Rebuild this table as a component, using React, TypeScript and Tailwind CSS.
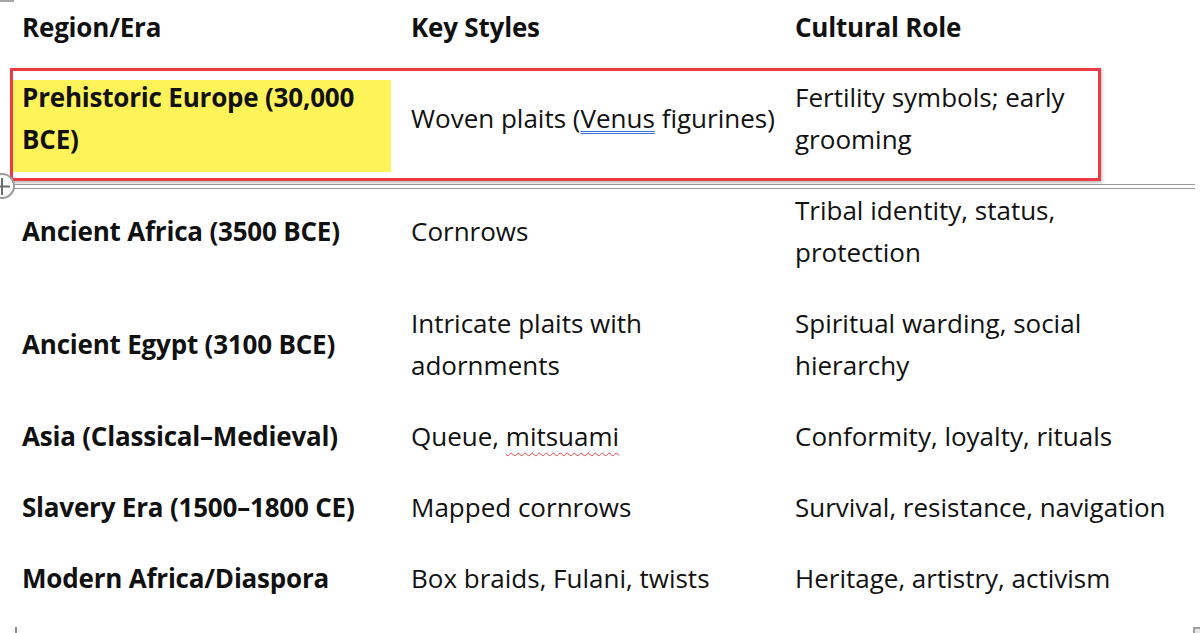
import type { ReactNode } from 'react';

type Row = {
  region: ReactNode;
  styles: ReactNode;
  role: ReactNode;
  tall?: boolean;
};

const rows: Row[] = [
  {
    region: 'Ancient Africa (3500 BCE)',
    styles: 'Cornrows',
    role: (
      <>
        Tribal identity, status,
        <br />
        protection
      </>
    ),
    tall: true,
  },
  {
    region: 'Ancient Egypt (3100 BCE)',
    styles: (
      <>
        Intricate plaits with
        <br />
        adornments
      </>
    ),
    role: (
      <>
        Spiritual warding, social
        <br />
        hierarchy
      </>
    ),
    tall: true,
  },
  {
    region: 'Asia (Classical–Medieval)',
    styles: (
      <>
        Queue,{' '}
        <span className="underline decoration-wavy decoration-[#e8414a] decoration-1 underline-offset-[6px]">
          mitsuami
        </span>
      </>
    ),
    role: 'Conformity, loyalty, rituals',
  },
  {
    region: 'Slavery Era (1500–1800 CE)',
    styles: 'Mapped cornrows',
    role: 'Survival, resistance, navigation',
  },
  {
    region: 'Modern Africa/Diaspora',
    styles: 'Box braids, Fulani, twists',
    role: 'Heritage, artistry, activism',
  },
];

const grid = 'grid grid-cols-[389px_384px_1fr] items-center';

export default function App() {
  return (
    <div
      className="relative h-[633px] w-[1200px] overflow-hidden bg-white text-[26px] leading-[42px] text-[#111]"
      style={{ fontFamily: '"Open Sans", "Noto Sans", sans-serif' }}
    >
      {/* ruler bits */}
      <div className="absolute left-0 top-0 h-[2px] w-[14px] bg-[#a6a6a6]" />
      <div className="absolute left-[15px] bottom-0 h-[6px] w-[2px] bg-[#8c8c8c]" />
      <div className="absolute right-0 bottom-0 h-[6px] w-[7px] border-l-2 border-t-2 border-[#a0a0a0] bg-[#e6e6e6]" />

      <div className="pl-[12px]">
        {/* Header */}
        <div className={`${grid} h-[63px] pb-[9px] font-bold tracking-[-0.2px]`}>
          <div className="pl-[10px]">Region/Era</div>
          <div className="pl-[10px]">Key Styles</div>
          <div className="pl-[10px]">Cultural Role</div>
        </div>

        {/* Selected row */}
        <div className="relative h-[111px]">
          <div className={`${grid} h-full items-start`}>
            <div className="mt-[17px] h-[92px] w-[379px] bg-[#fff35a] pl-[10px] font-bold tracking-[-0.2px]">
              <div className="-mt-[4px] whitespace-nowrap">
                Prehistoric Europe (30,000
                <br />
                BCE)
              </div>
            </div>
            <div className="mt-[34px] pl-[10px] whitespace-nowrap">
              Woven plaits (
              <span className="underline decoration-double decoration-[#3a6fd8] decoration-1 underline-offset-[3px]">
                Venus
              </span>{' '}
              figurines)
            </div>
            <div className="mt-[13px] pl-[10px] whitespace-nowrap">
              Fertility symbols; early
              <br />
              grooming
            </div>
          </div>
        </div>

        {rows.map((r, i) => (
          <div key={i} className={`${grid} ${r.tall ? 'h-[113px]' : 'h-[71px]'}`}>
            <div className="pl-[10px] font-bold tracking-[-0.2px] whitespace-nowrap">{r.region}</div>
            <div className="pl-[10px] whitespace-nowrap">{r.styles}</div>
            <div className="pl-[10px] whitespace-nowrap">{r.role}</div>
          </div>
        ))}
      </div>

      {/* selection outline over the first data row */}
      <div className="pointer-events-none absolute left-[10px] top-[68px] h-[113px] w-[1091px] border-[3px] border-[#ec3b45] shadow-[1px_2px_3px_rgba(0,0,0,0.25)]" />

      {/* insert-row indicator */}
      <div className="pointer-events-none absolute left-[12px] top-[184px] h-[5px] w-[1183px] border-y border-[#9a9a9a]" />
      <div className="absolute -left-[11px] top-[173px] h-[26px] w-[26px] rounded-full border-2 border-[#9a9a9a] bg-white">
        <svg width="26" height="26" viewBox="0 0 26 26" className="-ml-[2px] -mt-[2px]">
          <path d="M4 13.5h17M13 5v17" stroke="#6a6a6a" strokeWidth="2" />
        </svg>
      </div>
    </div>
  );
}
